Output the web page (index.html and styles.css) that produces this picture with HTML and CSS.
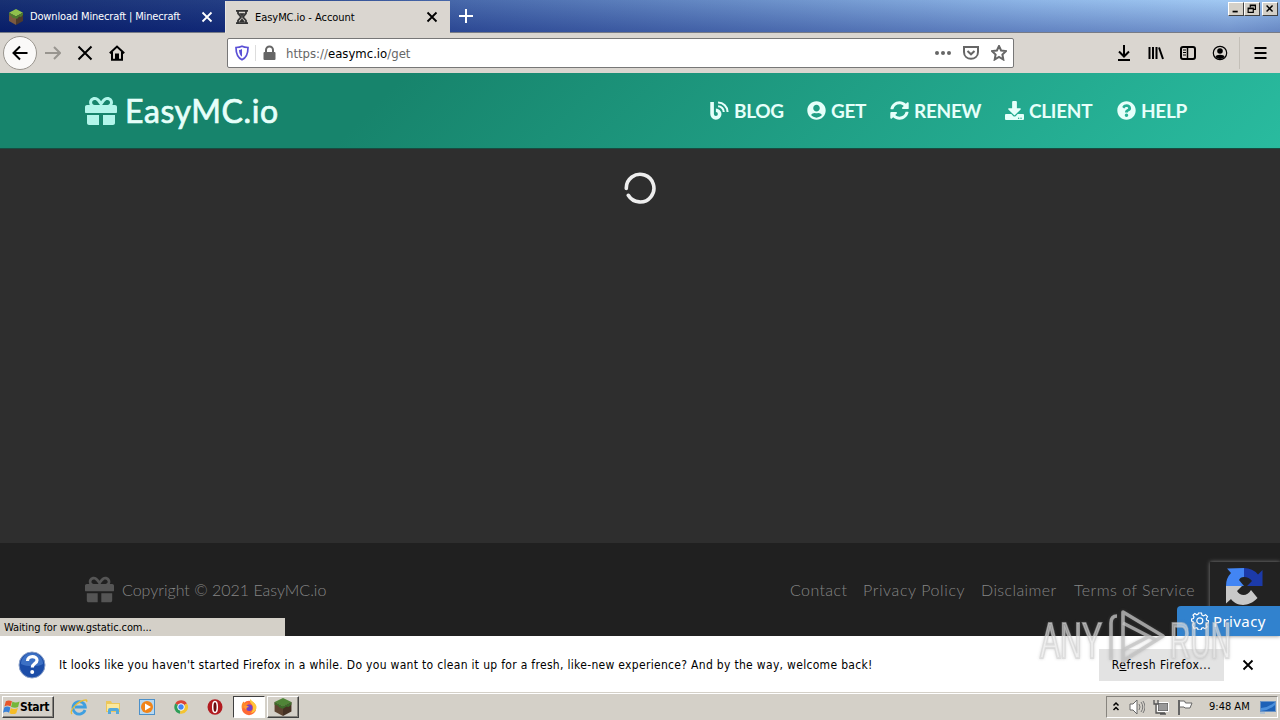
FILE: index.html
```html
<!DOCTYPE html>
<html lang="en">
<head>
    <meta charset="UTF-8">
    <meta name="viewport" content="width=device-width, initial-scale=1.0">
    <title>EasyMC.io - Account</title>
    <link rel="stylesheet" href="styles.css">
</head>
<body>
    <svg width="0" height="0" class="defs">
        <symbol id="gift" viewBox="0 0 512 512"><path d="M32 448c0 17.7 14.3 32 32 32h160V320H32v128zm256 32h160c17.7 0 32-14.3 32-32V320H288v160zm192-320h-42.1c6.2-12.1 10.1-25.5 10.1-40 0-48.5-39.5-88-88-88-41.6 0-68.5 21.3-103 68.3-34.5-47-61.4-68.3-103-68.3-48.5 0-88 39.5-88 88 0 14.5 3.8 27.9 10.1 40H32c-17.7 0-32 14.3-32 32v80c0 8.8 7.2 16 16 16h480c8.8 0 16-7.2 16-16v-80c0-17.7-14.3-32-32-32zm-326.1 0c-22.1 0-40-17.9-40-40s17.9-40 40-40c19.9 0 34.6 3.3 86.1 80h-86.1zm206.1 0h-86.1c51.4-76.5 65.7-80 86.1-80 22.1 0 40 17.9 40 40s-17.9 40-40 40z"/></symbol>
        <symbol id="cross" viewBox="0 0 16 16"><path d="M3.5 3.500l9 9M12.500 3.500l-9 9" fill="none" stroke="currentColor" stroke-width="1.800"/></symbol>
        <symbol id="block" viewBox="0 0 16 16">
            <path d="M8 0l7 3.7L8 7.5 1 3.7z" fill="#8fc04c"/>
            <path d="M1 3.7l7 3.8V16l-7-4z" fill="#7b5a40"/>
            <path d="M15 3.7L8 7.5V16l7-4z" fill="#4d3a2c"/>
            <path d="M1 3.7l7 3.8 7-3.8v2L13 8l-2-.5L9 10 7 9 5 9 3 6.5 1 6z" fill="#4d7c2d"/>
        </symbol>
        <symbol id="grass" viewBox="0 0 16 16">
            <path d="M8 0l7.500 3.500L8 7.500.5 3.500z" fill="#4f8437"/>
            <path d="M.5 3.500L8 7.500V16L.5 12z" fill="#5d4330"/>
            <path d="M15.500 3.500L8 7.500V16l7.500-4z" fill="#463123"/>
            <path d="M.5 3.500L8 7.500l7.500-4v2.200L13 8l-2-.5L8 9.500 5 8.500 3 6.500.5 6z" fill="#3c6b29"/>
        </symbol>
    </svg>

    <div class="tabs">
        <div class="tab">
            <svg class="tab-icon" viewBox="0 0 16 16"><use href="#block"/></svg>
            <span class="tab-title title-one">Download Minecraft | Minecraft</span>
            <svg class="tab-close"><use href="#cross"/></svg>
        </div>
        <div class="tab active">
            <svg class="tab-icon" viewBox="0 0 14 16" fill="none" stroke="#333" stroke-width="1.8"><path d="M1 1.900h12M1 14.100h12M3 2v2.500L6 8l-3 3.500V14M11 2v2.500L8 8l3 3.500V14"/><path d="M4.500 4.500h5L7 7.500zM4.500 13L7 9.500 9.500 13z" fill="#333" stroke-width=".6"/></svg>
            <span class="tab-title title-two">EasyMC.io - Account</span>
            <svg class="tab-close"><use href="#cross"/></svg>
        </div>
        <svg class="new-tab" viewBox="0 0 16 16"><path d="M8 1v14M1 8h14" stroke="#fff" stroke-width="2"/></svg>
        <div class="window-buttons">
            <svg viewBox="0 0 16 14"><path d="M4 10h6" stroke="#000" stroke-width="2"/></svg>
            <svg viewBox="0 0 16 14"><path d="M6 5V2.500h6v5h-2M6 3h6M3.500 6v5h6V6zM3.500 6.500h6" fill="none" stroke="#000" stroke-width="1.400"/></svg>
            <svg class="close" viewBox="0 0 16 14"><path d="M4 3l7 7M11 3l-7 7" stroke="#000" stroke-width="1.700"/></svg>
        </div>
    </div>

    <div class="toolbar">
        <div class="back"><svg viewBox="0 0 16 16"><path d="M15.500 8H1.500M8 1.500L1.500 8 8 14.500" /></svg></div>
        <svg class="tool forward" viewBox="0 0 16 16"><path d="M0 8h15M9 2l6 6-6 6"/></svg>
        <svg class="tool stop" viewBox="0 0 16 16"><path d="M1.500 1.500l13 13M14.500 1.500l-13 13"/></svg>
        <svg class="tool home" viewBox="0 0 16 16"><path d="M.8 8.200L8 1.500l7.200 6.700M3 7v7.800h10V7"/><path d="M7 14V9.500h2V14"/></svg>
        <div class="urlbar">
            <svg class="shield" viewBox="0 0 16 16"><path d="M8 1.200c2 1 4 1.200 6 1.300 0 6-1 10-6 12.300C3 12.500 2 8.500 2 2.500c2-.1 4-.3 6-1.300z" fill="none" stroke="#5b50d6" stroke-width="1.700"/><path d="M8 4v7.800C5.800 10 5.200 8 5 5c1.200-.2 2-.4 3-1z" fill="#5b50d6"/></svg>
            <svg class="lock" viewBox="0 0 14 16"><path d="M3.500 8V5a3.500 3.500 0 0 1 7 0v3" fill="none" stroke="#666" stroke-width="2"/><rect x="1" y="7" width="12" height="8" rx="1" fill="#666"/></svg>
            <span class="url">https://<b>easymc.io</b>/get</span>
            <svg class="dots" viewBox="0 0 16 16" fill="#666"><circle cx="2" cy="8" r="2"/><circle cx="8" cy="8" r="2"/><circle cx="14" cy="8" r="2"/></svg>
            <svg class="pocket" viewBox="0 0 16 16"><path d="M1 2h14v5c0 9-14 9-14 0z"/><path d="M4.500 6L8 9.300 11.500 6"/></svg>
            <svg class="star" viewBox="0 0 16 16"><path d="M8 1l2.100 4.500 4.900.6-3.600 3.400.9 5L8 12l-4.300 2.500.9-5L1 6.100l4.900-.6z"/></svg>
        </div>
        <div class="tools">
            <svg viewBox="0 0 16 16"><path d="M8 0v11M3 6.500L8 11.500l5-5M2 15h12"/></svg>
            <svg viewBox="0 0 16 16"><path d="M1.500 2v12M5 2v12M8.500 2v12M11 2.500l4 11.500"/></svg>
            <svg viewBox="0 0 16 16"><rect x="1" y="2" width="14" height="12" rx="2"/><path d="M7.500 2v12" stroke-width="1.500"/><path d="M3 5h3M3 7.500h3M3 10h3" stroke-width="1"/></svg>
            <svg viewBox="0 0 16 16"><circle cx="8" cy="8" r="6.700" stroke-width="1.200"/><circle cx="8" cy="6" r="2.800" fill="#000" stroke="none"/><path d="M3.500 12c0-3 9-3 9 0-2 2.500-7 2.500-9 0z" fill="#000" stroke="none"/></svg>
            <svg class="menu" viewBox="0 0 16 16"><path d="M2 3h12M2 8h12M2 13h12"/></svg>
        </div>
    </div>

    <header>
        <div class="brand">
            <svg><use href="#gift"/></svg>
            <span>EasyMC.io</span>
        </div>
        <nav>
            <a href="#blog"><svg viewBox="0 0 20 20"><path d="M2.200 1v12.800a4 4 0 1 0 4-4" fill="none" stroke="currentColor" stroke-width="3.800"/><path d="M8.500 1.600A10 10 0 0 1 18.500 11.500M8.500 5.500a6 6 0 0 1 6 6" fill="none" stroke="currentColor" stroke-width="2.200"/></svg>BLOG</a>
            <a href="#get"><svg viewBox="0 0 496 512"><path d="M248 8C111 8 0 119 0 256s111 248 248 248 248-111 248-248S385 8 248 8zm0 96c48.600 0 88 39.400 88 88s-39.400 88-88 88-88-39.400-88-88 39.400-88 88-88zm0 344c-58.700 0-111.300-26.600-146.500-68.200 18.800-35.400 55.600-59.800 98.500-59.800 2.400 0 4.800.4 7.100 1.100 13 4.200 26.600 6.900 40.900 6.900 14.300 0 28-2.700 40.900-6.900 2.300-.7 4.700-1.100 7.100-1.100 42.900 0 79.700 24.400 98.500 59.800C359.300 421.400 306.700 448 248 448z"/></svg>GET</a>
            <a href="#renew"><svg viewBox="0 0 512 512"><path d="M370.720 133.280C339.458 104.008 298.888 87.962 255.848 88c-77.458.068-144.328 53.178-162.791 126.850-1.344 5.363-6.122 9.150-11.651 9.150H24.103c-7.498 0-13.194-6.807-11.807-14.176C33.933 94.924 134.813 8 256 8c66.448 0 126.791 26.136 171.315 68.685L463.030 40.970C478.149 25.851 504 36.559 504 57.941V192c0 13.255-10.745 24-24 24H345.941c-21.382 0-32.090-25.851-16.971-40.971l41.750-41.749zM32 296h134.059c21.382 0 32.090 25.851 16.971 40.971l-41.750 41.750c31.262 29.273 71.835 45.319 114.876 45.280 77.418-.07 144.315-53.144 162.787-126.849 1.344-5.363 6.122-9.150 11.651-9.150h57.304c7.498 0 13.194 6.807 11.807 14.176C478.067 417.076 377.187 504 256 504c-66.448 0-126.791-26.136-171.315-68.685L48.970 471.030C33.851 486.149 8 475.441 8 454.059V320c0-13.255 10.745-24 24-24z"/></svg>RENEW</a>
            <a href="#client"><svg viewBox="0 0 512 512"><path d="M216 0h80c13.300 0 24 10.700 24 24v168h87.700c17.800 0 26.700 21.500 14.100 34.100L269.700 378.300c-7.500 7.500-19.800 7.500-27.300 0L90.100 226.100c-12.600-12.600-3.700-34.100 14.100-34.100H192V24c0-13.300 10.700-24 24-24zm296 376v112c0 13.300-10.700 24-24 24H24c-13.300 0-24-10.700-24-24V376c0-13.300 10.700-24 24-24h146.700l49 49c20.100 20.100 52.500 20.100 72.600 0l49-49H488c13.300 0 24 10.700 24 24zm-124 88c0-11-9-20-20-20s-20 9-20 20 9 20 20 20 20-9 20-20zm64 0c0-11-9-20-20-20s-20 9-20 20 9 20 20 20 20-9 20-20z"/></svg>CLIENT</a>
            <a href="#help"><svg viewBox="0 0 512 512"><path d="M504 256c0 136.997-111.043 248-248 248S8 392.997 8 256C8 119.083 119.043 8 256 8s248 111.083 248 248zM262.655 90c-54.497 0-89.255 22.957-116.549 63.758-3.536 5.286-2.353 12.415 2.715 16.258l34.699 26.310c5.205 3.947 12.621 3.008 16.665-2.122 17.864-22.658 30.113-35.797 57.303-35.797 20.429 0 45.698 13.148 45.698 32.958 0 14.976-12.363 22.667-32.534 33.976C247.128 238.528 216 254.941 216 296v4c0 6.627 5.373 12 12 12h56c6.627 0 12-5.373 12-12v-1.333c0-28.462 83.186-29.647 83.186-106.667 0-58.002-60.165-102-116.531-102zM256 338c-25.365 0-46 20.635-46 46 0 25.364 20.635 46 46 46s46-20.636 46-46c0-25.365-20.635-46-46-46z"/></svg>HELP</a>
        </nav>
    </header>

    <main>
        <svg class="spinner" viewBox="0 0 32 32"><path d="M2.300 16.500A13.800 13.800 0 1 1 4.300 23.300" fill="none" stroke="#eee" stroke-width="3.600" stroke-linecap="round"/></svg>
    </main>

    <footer>
        <div class="copyright">
            <svg><use href="#gift"/></svg>
            <span>Copyright © 2021 EasyMC.io</span>
        </div>
        <div class="links">
            <a class="contact" href="#contact">Contact</a>
            <a class="policy" href="#privacy">Privacy Policy</a>
            <a class="disclaimer" href="#disclaimer">Disclaimer</a>
            <a class="terms" href="#terms">Terms of Service</a>
        </div>
        <div class="recaptcha">
            <svg viewBox="0 0 40 40">
                <path d="M20 2a18 18 0 0 1 14 6.500L38.500 4v16H23l5-5a10 10 0 0 0-8-4z" fill="#1c3aa9"/>
                <path d="M20 2v9c-3 0-4 1-5 3l5 6H2A18 18 0 0 1 7 7L3 2.500z" fill="#4285f4"/>
                <path d="M2 20h16l-5 5c3 5 10 6 14-1l6.500 8C23 43 11 39 7 33l-5 4.500z" fill="#c8c8c8"/>
            </svg>
        </div>
        <div class="privacy">
            <svg viewBox="0 0 18 18" fill="none" stroke="#fff" stroke-width="1.200"><path d="M7.500 1h3l.5 2.200 1.500.7 2-1.200 2 2-1.200 2 .6 1.500 1.600.5v2l-1.800.6-.7 1.600 1 1.900-1.900 1.900-1.900-1.100-1.600.7-.5 1.700h-3l-.5-1.700-1.500-.7-2 1.100L1.500 13l1.200-1.900L2 9.500.6 9V7l1.800-.5.6-1.600-1-1.800 1.800-1.500 2 1.200 1.200-.5z"/><circle cx="8.800" cy="8.800" r="3"/></svg>
            <span>Privacy</span>
        </div>
        <div class="status"><span>Waiting for www.gstatic.com...</span></div>
    </footer>

    <div class="notification">
        <svg class="info" viewBox="0 0 28 28"><circle cx="14" cy="14" r="13" fill="#1c4da8" stroke="#8aa0c8"/><path d="M3 13a11 11 0 0 1 22 0c-5 3-16 3-22 0z" fill="#3c70c4"/><path d="M9.500 10c0-6 9.500-5.500 9.500-.8 0 3.500-4.700 3.300-4.700 7.300" fill="none" stroke="#fff" stroke-width="3.200"/><circle cx="14.200" cy="21" r="2" fill="#fff"/></svg>
        <span class="message">It looks like you haven't started Firefox in a while. Do you want to clean it up for a fresh, like-new experience? And by the way, welcome back!</span>
        <button><span>R<u>e</u>fresh Firefox...</span></button>
        <svg class="dismiss"><use href="#cross"/></svg>
    </div>

    <div class="taskbar">
        <div class="start">
            <svg viewBox="0 0 18 16"><path d="M3 2q3-2 6.500 0L8 7.500q-3-2-6.500 0z" fill="#e8562a"/><path d="M10 2.300q3 2 7.500 0L16 8q-3 1.500-7.500 0z" fill="#75b73b"/><path d="M1.300 8.500q3-2 6.500 0L6.500 14q-3-2-6.500 0z" fill="#3a82d8"/><path d="M8.300 9q3 2 7.500 0L14 14.500q-3 2-7.200 0z" fill="#f6bd28"/></svg>
            <span>Start</span>
        </div>
        <div class="pinned">
            <svg viewBox="0 0 18 18"><path d="M15 12a6.200 6.200 0 1 1 .3-3H5" fill="none" stroke="#3f9fe0" stroke-width="2.800"/><path d="M2 16C-1 13 8 2 16 2c1 0 1 1 .5 2" fill="none" stroke="#e8bd36" stroke-width="1.300"/></svg>
            <svg viewBox="0 0 18 18"><path d="M2 3h5l1 2h8v9H2z" fill="#ecc75b"/><path d="M3 6h12v7H3z" fill="#fbe89c"/><path d="M4 16v-4q0-2 2-2h7q2 0 2 2v4h-3v-3H7v3z" fill="#55a9da"/></svg>
            <svg viewBox="0 0 18 18"><rect x="1.500" y="1.500" width="15" height="15" fill="#b7d8f1" stroke="#4c90c9"/><circle cx="9" cy="9" r="6" fill="#f18419"/><path d="M7 5.500l6 3.500-6 3.500z" fill="#fff"/></svg>
            <svg viewBox="0 0 18 18"><path d="M9 9L3.300 5.500a6.700 6.700 0 0 1 11.600 0z" fill="#db4437"/><path d="M9 9l-1 6.700A6.700 6.700 0 0 1 3.300 5.500z" fill="#2f9e58"/><path d="M9 9l5.900-3.500A6.700 6.700 0 0 1 8 15.700z" fill="#f4c430"/><circle cx="9" cy="9" r="3.300" fill="#4285f4" stroke="#fff"/></svg>
            <svg viewBox="0 0 18 18"><ellipse cx="9" cy="9" rx="7.500" ry="7.800" fill="#b21b20"/><ellipse cx="9" cy="9" rx="2.300" ry="5.500" fill="#6c0c10" stroke="#fff" stroke-width="1.500"/></svg>
        </div>
        <div class="task current"><svg viewBox="0 0 18 18"><circle cx="9" cy="10" r="7.200" fill="#ff6a35"/><path d="M2 11C1 8 2 5 3.500 3.500L5 5.500l3-1-1 3z" fill="#ff8a2b"/><path d="M10.500 1c-1 2-.5 3.500 1 5 2 2 2.500 6-1 9 4 0 6-3 6-6.500C16 5 12 4 10.500 1z" fill="#ffc63a"/><circle cx="9.300" cy="9.800" r="3.200" fill="#7542c9"/><path d="M4 8c2-.5 4-.5 5 1-2 0-3 1-2.500 2.500C5 11.500 4 10 4 8z" fill="#ff9b36"/></svg></div>
        <div class="task"><svg viewBox="0 0 16 16"><use href="#grass"/></svg></div>
        <div class="tray">
            <svg class="chevrons" viewBox="0 0 10 14"><path d="M2.500 5.500L5 3l2.500 2.500M2.500 10L5 7.500 7.500 10" fill="none" stroke="#000" stroke-width="1.500"/></svg>
            <svg class="tray-icon" viewBox="0 0 16 16"><path d="M1 5h3l4-4v14l-4-4H1z" fill="#fff" stroke="#666"/><path d="M10 5q2 3 0 6M12 3q3.500 5 0 10M14 2q4 6 0 12" fill="none" stroke="#777"/></svg>
            <svg class="tray-icon network" viewBox="0 0 16 16"><rect x="5" y="4" width="10" height="8" fill="#999" stroke="#555"/><path d="M4.500 3.500h11v9h-11z" fill="none" stroke="#fff"/><path d="M1 1v4h4V1M3 5v9h9M7 15h6" fill="none" stroke="#555" stroke-width="1.300"/></svg>
            <svg class="tray-icon flag" viewBox="0 0 16 16"><path d="M2 1v15" stroke="#666" stroke-width="2"/><path d="M2.500 2h5l1 2H15l-2 5H8L7 8H2.500z" fill="#fff" stroke="#666"/></svg>
            <span class="clock">9:48 AM</span>
            <svg class="desktop" viewBox="0 0 16 14"><rect x=".5" y="1.500" width="15" height="10" fill="#1d61b7" stroke="#6d94c4"/><path d="M1 8q7 0 14-6v3q-7 6-14 6z" fill="#4b8fdb"/><path d="M0 13h5" stroke="#8fb3da"/></svg>
        </div>
    </div>

    <svg class="watermark" viewBox="0 0 204 66">
        <g fill="#fff" fill-opacity=".5" stroke="#d0d0d0" stroke-opacity=".55" stroke-width="2.200">
            <text x="5" y="51" textLength="62" lengthAdjust="spacingAndGlyphs">ANY</text>
            <text x="135" y="51" textLength="61" lengthAdjust="spacingAndGlyphs">RUN</text>
        </g>
        <g fill="none" stroke="#c4c4c4" stroke-opacity=".75" stroke-width="3.600" stroke-linejoin="round">
            <path d="M88 5L128 29 88 54z"/>
            <path d="M88 16l33 17M88 43l25-13"/>
            <path d="M82 9q-6 0-6 7v37"/>
        </g>
    </svg>
</body>
</html>
```
FILE: styles.css
```css
* {
    margin: 0;
    padding: 0;
    box-sizing: border-box;
}

body {
    width: 1280px;
    height: 720px;
    overflow: hidden;
    position: relative;
    display: flex;
    flex-direction: column;
    font-family: "DejaVu Sans Condensed", "DejaVu Sans", sans-serif;
    font-stretch: condensed;
    font-size: 11px;
    color: #000;
    background-color: #2e2e2e;
}

a {
    color: inherit;
    text-decoration: none;
}

svg {
    flex: none;
}

span {
    white-space: nowrap;
}

.defs {
    position: absolute;
}

/* Browser tabs */
.tabs {
    height: 33px;
    flex: none;
    position: relative;
    display: flex;
    border-bottom: 1px solid #777b86;
    background: linear-gradient(to bottom, rgba(255,255,255,0.06), rgba(0,10,100,0.28)), linear-gradient(to right, #0a246a 0%, #16327c 17%, #3d60a6 36%, #6087c4 58%, #86b0e4 80%, #9cc6f2 96%, #8fb8e8 100%);
}

.tab {
    width: 225px;
    display: flex;
    align-items: center;
    padding: 1px 10px 0 8px;
    color: #fff;
}

.tab.active {
    height: 32px;
    margin-top: 1px;
    padding: 0 10px 0 9px;
    color: #000;
    background-color: #dad6d0;
    border-left: 1px solid #e8e5e0;
}

.tab-icon {
    width: 16px;
    height: 16px;
    margin-right: 6px;
}

.active .tab-icon {
    width: 14px;
    margin-right: 6px;
}

.tab-title {
    flex: 1;
}

.title-one {
    letter-spacing: -0.15px;
}

.title-two {
    letter-spacing: -0.05px;
}

.tab-close {
    width: 16px;
    height: 16px;
}

.new-tab {
    width: 16px;
    height: 16px;
    margin: 8px 0 0 8px;
}

.window-buttons {
    margin: 2px 2px 0 auto;
    display: flex;
}

.window-buttons svg {
    width: 16px;
    height: 14px;
    background-color: #d4d0c8;
    border: 1px solid;
    border-color: #fff #404040 #404040 #fff;
}

.window-buttons .close {
    margin-left: 2px;
}

/* Toolbar */
.toolbar {
    height: 40px;
    flex: none;
    display: flex;
    align-items: center;
    padding-left: 3px;
    background-color: #dad6d0;
}

.toolbar svg {
    width: 16px;
    height: 16px;
    fill: none;
    stroke: #000;
    stroke-width: 2;
}

.back {
    width: 34px;
    height: 34px;
    display: flex;
    align-items: center;
    justify-content: center;
    border: 1px solid #99958e;
    border-radius: 50%;
    background-color: #faf9f8;
}

.tool {
    margin-left: 16px;
}

.toolbar .forward {
    margin-left: 8px;
    stroke: #98958f;
}

.urlbar {
    width: 787px;
    height: 30px;
    margin-left: 102px;
    padding: 0 6px;
    display: flex;
    align-items: center;
    background-color: #fff;
    border: 1px solid #777;
    border-radius: 2px;
}

.urlbar .shield {
    stroke: none;
}

.urlbar .lock {
    width: 27px;
    height: 16px;
    margin-left: 6px;
    box-shadow: -1px 0 #ddd;
    stroke: none;
}

.url {
    margin-left: 3px;
    font-size: 13px;
    color: #666;
}

.url b {
    font-weight: normal;
    color: #000;
}

.urlbar .dots {
    margin-left: auto;
    stroke: none;
    fill: #666;
}

.urlbar .pocket,
.urlbar .star {
    margin-left: 12px;
    stroke: #666;
}

.tools {
    flex: 1;
    align-self: stretch;
    display: flex;
    align-items: center;
    justify-content: flex-end;
    gap: 16px;
    padding-right: 3px;
}

.tools .menu {
    width: 38px;
    height: 32px;
    margin-left: -5px;
    padding: 8px 8px 8px 12px;
    border-left: 1px solid #c3bfb8;
}

/* Site header */
header {
    height: 76px;
    flex: none;
    display: flex;
    align-items: center;
    justify-content: space-between;
    padding: 0 92px 0 85px;
    font-family: Lato, sans-serif;
    color: #e6fffa;
    background: linear-gradient(135deg, #17846c 30%, #29bb9f 100%);
    border-bottom: 1px solid #174b40;
}

.brand {
    display: flex;
    align-items: center;
    font-size: 32px;
    letter-spacing: 0.6px;
}

.brand span {
    -webkit-text-stroke: 0.7px currentColor;
}

.brand svg {
    width: 32px;
    height: 32px;
    margin-right: 8px;
    fill: #b2f5ea;
}

nav {
    display: grid;
    grid-template-columns: 97px 83px 115px 112px 71px;
}

nav a {
    display: flex;
    align-items: center;
    font-size: 19px;
    font-weight: bold;
    letter-spacing: -0.3px;
}

nav svg {
    width: 19px;
    height: 19px;
    margin-right: 5px;
    fill: currentColor;
}

main {
    height: 394px;
    flex: none;
    padding-top: 23px;
    background-color: #2e2e2e;
}

.spinner {
    display: block;
    width: 32px;
    height: 32px;
    margin: 0 auto;
}

/* Site footer */
footer {
    height: 93px;
    flex: none;
    position: relative;
    display: flex;
    align-items: center;
    justify-content: space-between;
    padding: 0 85px;
    font-family: Lato, sans-serif;
    font-size: 16px;
    font-weight: 300;
    color: #858585;
    background-color: #202020;
}

.copyright {
    display: flex;
    align-items: center;
}

.copyright svg {
    width: 29px;
    height: 29px;
    margin-right: 8px;
    fill: #555;
}

.links {
    display: grid;
    grid-template-columns: 73px 118px 93px 121px;
}

.contact,
.disclaimer {
    letter-spacing: 0.4px;
}

.policy {
    letter-spacing: 0.6px;
}

.terms {
    letter-spacing: 0.48px;
    white-space: nowrap;
}

.recaptcha {
    position: absolute;
    top: 19px;
    right: 0;
    width: 70px;
    height: 74px;
    padding: 4px 0 0 14px;
    background-color: #222;
    box-shadow: 0 0 4px #808080;
}

.recaptcha svg {
    width: 40px;
    height: 40px;
}

.privacy {
    position: absolute;
    right: 0;
    bottom: 0;
    width: 103px;
    height: 30px;
    display: flex;
    align-items: center;
    padding-left: 14px;
    font-family: "Noto Sans", sans-serif;
    font-size: 15px;
    font-weight: normal;
    letter-spacing: 0.4px;
    color: #fff;
    background-color: #3182ce;
    border-radius: 4px 0 0 0;
}

.privacy svg {
    width: 18px;
    height: 18px;
    margin-right: 4px;
}

.status {
    position: absolute;
    left: 0;
    bottom: 0;
    width: 285px;
    height: 18px;
    padding-left: 4px;
    font: 11px/20px "DejaVu Sans Condensed", "DejaVu Sans", sans-serif;
    font-stretch: condensed;
    letter-spacing: -0.1px;
    color: #000;
    background-color: #d4d0c8;
}

/* Firefox message bar */
.notification {
    height: 56px;
    flex: none;
    display: flex;
    align-items: center;
    padding: 1px 24px 0 18px;
    font-size: 12px;
    background-color: #fff;
}

.info {
    width: 28px;
    height: 28px;
    margin-right: 13px;
}

.message {
    width: 1040px;
    padding-top: 1px;
    letter-spacing: 0.31px;
}

.notification button {
    width: 125px;
    height: 32px;
    flex: none;
    font: inherit;
    letter-spacing: 0.52px;
    border: none;
    background-color: #e3e3e3;
}

.dismiss {
    width: 16px;
    height: 16px;
    margin-left: auto;
}

/* Taskbar */
.taskbar {
    height: 28px;
    flex: none;
    display: flex;
    align-items: center;
    padding: 2px 2px 2px;
    border-top: 1px solid #d4d0c8;
    box-shadow: inset 0 1px #fff;
    background-color: #d4d0c8;
}

.start {
    width: 52px;
    height: 22px;
    display: flex;
    align-items: center;
    font-size: 12px;
    font-weight: bold;
    letter-spacing: -0.3px;
    border: 1px solid;
    border-color: #fff #404040 #404040 #fff;
    box-shadow: inset -1px -1px #87847e;
}

.start svg {
    width: 17px;
    height: 16px;
}

.pinned {
    display: flex;
    gap: 16px;
    margin-left: 16px;
}

.pinned svg,
.task svg {
    width: 18px;
    height: 18px;
}

.task {
    width: 32px;
    height: 22px;
    display: flex;
    align-items: center;
    justify-content: center;
    margin-left: 2px;
    border: 1px solid;
    border-color: #fff #404040 #404040 #fff;
    box-shadow: inset -1px -1px #87847e;
}

.task.current {
    margin-left: 9px;
    background-color: #fff;
    border-color: #404040 #fff #fff #404040;
    box-shadow: none;
}

.tray {
    width: 172px;
    height: 22px;
    margin-left: auto;
    display: flex;
    align-items: center;
    padding-left: 4px;
    border: 1px solid;
    border-color: #87847e #fff #fff #87847e;
}

.chevrons {
    width: 10px;
    height: 14px;
    margin-right: 8px;
}

.tray-icon {
    width: 16px;
    height: 16px;
    margin-right: 8px;
}

.clock {
    flex: 1;
    padding-left: 8px;
}

.desktop {
    width: 16px;
    height: 14px;
    margin-right: 1px;
}

.watermark {
    position: absolute;
    left: 1035px;
    top: 607px;
    width: 204px;
    height: 66px;
    font-family: "Liberation Sans Narrow", "Liberation Sans", sans-serif;
    font-size: 50px;
    filter: drop-shadow(0 0 1.5px rgba(120,120,120,0.45));
    pointer-events: none;
}
```
